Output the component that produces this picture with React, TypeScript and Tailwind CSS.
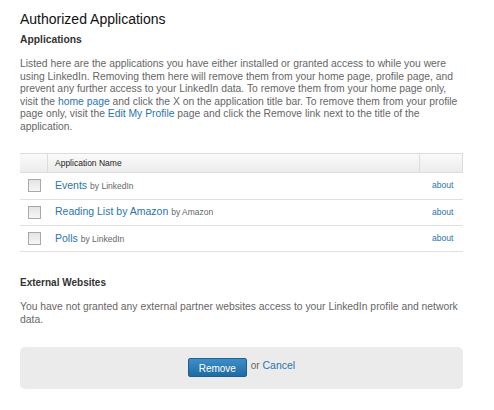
import React from "react";

const apps = [
  { name: "Events", by: "LinkedIn" },
  { name: "Reading List by Amazon", by: "Amazon" },
  { name: "Polls", by: "LinkedIn" },
];

const link = "text-[#2a74b0]";

export default function App() {
  return (
    <div
      className="w-[494px] h-[410px] bg-white overflow-hidden pl-[20px] pr-[31px] pt-[10px]"
      style={{ fontFamily: '"Liberation Sans", Arial, sans-serif' }}
    >
      <h1 className="text-[14px] leading-[18px] text-[#111]">Authorized Applications</h1>
      <h2 className="mt-[6px] text-[10.3px] leading-[12px] font-bold text-[#333]">Applications</h2>
      <div className="mt-[12px] text-[10.35px] leading-[12.55px] text-[#666] whitespace-nowrap">
        <div>Listed here are the applications you have either installed or granted access to while you were</div>
        <div>using LinkedIn. Removing them here will remove them from your home page, profile page, and</div>
        <div>prevent any further access to your LinkedIn data. To remove them from your home page only,</div>
        <div>
          visit the <a className={link}>home page</a> and click the X on the application title bar. To remove them from your profile
        </div>
        <div>
          page only, visit the <a className={link}>Edit My Profile</a> page and click the Remove link next to the title of the
        </div>
        <div>application.</div>
      </div>

      <div className="mt-[20px]">
        <div className="flex h-[20px] border-t border-b border-[#dcdcdc] bg-gradient-to-b from-[#fafafa] to-[#ececec]">
          <div className="w-[28px] border-r border-[#dcdcdc]" />
          <div className="flex-1 flex items-center pl-[7px] text-[8.5px] text-[#222]">Application Name</div>
          <div className="w-[44px] border-l border-r border-[#dcdcdc]" />
        </div>
        {apps.map((a) => (
          <div key={a.name} className="flex items-center h-[26.3px] border-b border-[#e0e0e0]">
            <div className="w-[28px] pl-[8px]">
              <div className="w-[13px] h-[13px] border border-[#a8a8a8] bg-gradient-to-b from-[#e4e4e4] to-[#f6f6f6]" />
            </div>
            <div className="flex-1 pl-[7px] flex items-baseline">
              <span className={`text-[10.5px] ${link}`}>{a.name}</span>
              <span className="ml-[3px] text-[8.5px] text-[#666]">by {a.by}</span>
            </div>
            <div className={`w-[44px] pl-[13px] text-[8.6px] ${link}`}>about</div>
          </div>
        ))}
      </div>

      <h2 className="mt-[25px] text-[10px] leading-[12px] font-bold text-[#333]">External Websites</h2>
      <div className="mt-[12px] text-[10.35px] leading-[12.55px] text-[#666] whitespace-nowrap">
        <div>You have not granted any external partner websites access to your LinkedIn profile and network</div>
        <div>data.</div>
      </div>

      <div className="mt-[21px] h-[42px] rounded-[5px] bg-[#ebebeb] flex justify-center pt-[11px]">
        <div className="flex items-start">
          <button className="w-[59px] h-[19px] rounded-[2px] border border-[#1c5f91] bg-gradient-to-b from-[#3d8fc8] to-[#1f6ba4] text-white text-[10px] leading-[17px] pt-[1px]">
            Remove
          </button>
          <span className="ml-[4px] text-[10px] text-[#666] leading-[14px]">
            or <a className={`${link} text-[10.5px]`}>Cancel</a>
          </span>
        </div>
      </div>
    </div>
  );
}
